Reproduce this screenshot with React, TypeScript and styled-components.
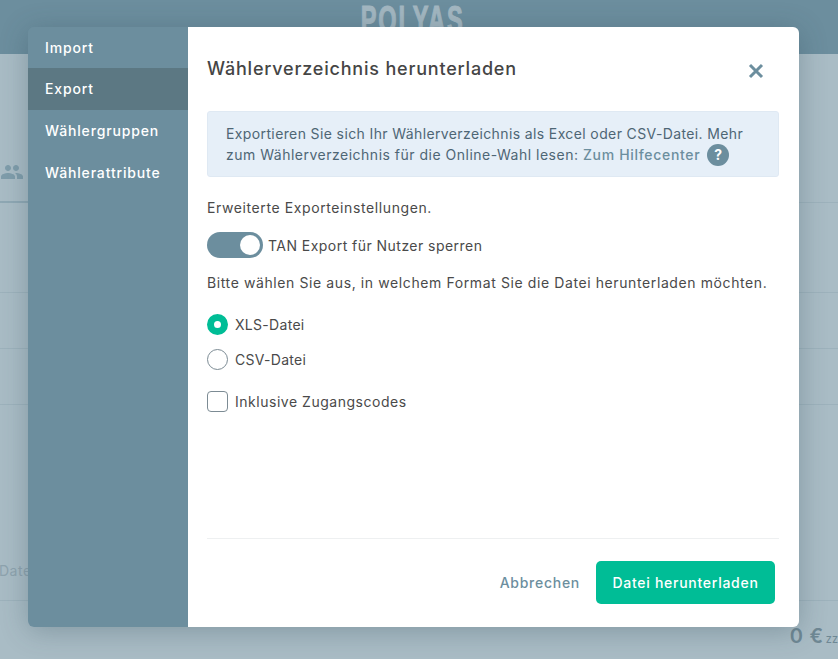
import React from "react";
import styled, { createGlobalStyle } from "styled-components";
import { MdPeople } from "react-icons/md";

const Global = createGlobalStyle`
  html, body { margin: 0; padding: 0; height: 100%; overflow: hidden; }
  * { box-sizing: border-box; }
  body { font-family: Inter, "Open Sans", "Liberation Sans", sans-serif; }
`;

const Page = styled.div`
  position: relative;
  width: 838px;
  height: 659px;
  overflow: hidden;
  background: #a9bcc5;
  display: flex;
  flex-direction: column;
`;
const Header = styled.header`
  height: 54px;
  background: #6c8e9e;
  display: flex;
  justify-content: center;
  padding: 0 12px 0 0;
  flex: none;
  overflow: hidden;
`;
const Logo = styled.div`
  font-family: "Liberation Sans", sans-serif;
  font-weight: 700;
  font-size: 38px;
  line-height: 40px;
  letter-spacing: 3px;
  color: #a3b7c1;
  -webkit-text-stroke: 1.2px #a3b7c1;
  transform: scaleX(0.62);
`;
const Tabs = styled.div`
  height: 149px;
  border-bottom: 1px solid #9db2bc;
  display: flex;
  flex: none;
`;
const ActiveTab = styled.div`
  width: 110px;
  height: 149px;
  border-bottom: 2px solid #8fa8b4;
  display: flex;
  align-items: flex-end;
  padding-bottom: 17px;
  color: #7f9dab;
`;
const Row = styled.div<{ $h: number }>`
  height: ${(p) => p.$h}px;
  border-bottom: 1px solid #9db2bc;
  flex: none;
  display: flex;
  align-items: flex-end;
  justify-content: space-between;
`;
const Faint = styled.span`
  font-size: 14px;
  letter-spacing: 0.5px;
  color: #8ea3ae;
  padding-bottom: 21px;
  margin-left: -1px;
`;
const Total = styled.div`
  display: flex;
  justify-content: flex-end;
  align-items: baseline;
  gap: 2px;
  padding-top: 23px;
  color: #6f8894;
  font-size: 20px;
  font-weight: 600;
  letter-spacing: 0.8px;
`;
const TotalUnit = styled.span`
  font-size: 11px;
  font-weight: 400;
  letter-spacing: 0;
`;

const Overlay = styled.div`
  position: absolute;
  inset: 0;
  padding: 27px 39px 32px 28px;
`;
const Modal = styled.div`
  height: 600px;
  display: flex;
  border-radius: 6px;
  overflow: hidden;
  box-shadow: 0 4px 28px rgba(40, 65, 78, 0.3);
`;
const Sidebar = styled.nav`
  width: 160px;
  flex: none;
  background: #6c8e9e;
  display: flex;
  flex-direction: column;
`;
const NavItem = styled.div<{ $active?: boolean }>`
  height: 42px;
  padding: 0 0 2px 17px;
  display: flex;
  align-items: center;
  color: #fff;
  font-size: 14px;
  font-weight: 500;
  letter-spacing: 0.85px;
  background: ${(p) => (p.$active ? "#5c7883" : "transparent")};
  &:first-child { height: 41px; padding-bottom: 0; }
`;
const Main = styled.main`
  flex: 1;
  background: #fff;
  padding: 0 20px 0 19px;
  display: flex;
  flex-direction: column;
  color: #4a4a4a;
`;
const TitleRow = styled.div`
  height: 84px;
  display: flex;
  align-items: flex-start;
  justify-content: space-between;
  padding: 30px 15px 0 0;
  flex: none;
`;
const Title = styled.h2`
  margin: 0;
  font-size: 18px;
  line-height: 24px;
  font-weight: 500;
  letter-spacing: 0.8px;
  color: #454545;
`;
const CloseIcon = styled.svg`
  width: 16px;
  height: 16px;
  margin-top: 6px;
  stroke: #6c8e9e;
  stroke-width: 3;
  fill: none;
`;
const Notice = styled.div`
  height: 66px;
  background: #e6eff8;
  border: 1px solid #dfe9f3;
  border-radius: 3px;
  padding: 11px 18px;
  font-size: 14px;
  line-height: 21px;
  color: #4e6675;
`;
const NoticeLine = styled.div<{ $track: number }>`
  display: flex;
  align-items: center;
  height: 21px;
  white-space: pre;
  letter-spacing: ${(p) => p.$track}px;
`;
const HelpLink = styled.a`
  color: #6c8e9e;
  font-weight: 500;
  letter-spacing: 0.68px;
`;
const HelpBadge = styled.span`
  display: inline-flex;
  align-items: center;
  justify-content: center;
  width: 22px;
  height: 22px;
  border-radius: 50%;
  background: #6c8e9e;
  color: #fff;
  font-size: 14px;
  font-weight: 700;
  margin-left: 7px;
  line-height: 1;
`;
const Para = styled.p<{ $top?: number }>`
  margin: ${(p) => p.$top ?? 0}px 0 0;
  font-size: 14px;
  line-height: 20px;
  letter-spacing: 0.6px;
`;
const ToggleRow = styled.div`
  display: flex;
  align-items: center;
  gap: 5px;
  margin: 14px 0 15px;
  font-size: 14px;
  letter-spacing: 0.46px;
  height: 26px;
`;
const Toggle = styled.span`
  width: 56px;
  height: 26px;
  border-radius: 13px;
  background: #6c8e9e;
  display: flex;
  justify-content: flex-end;
  align-items: center;
  padding-right: 3px;
`;
const Knob = styled.span`
  width: 20px;
  height: 20px;
  border-radius: 50%;
  background: #fff;
`;
const Choice = styled.label<{ $top: number; $track: number }>`
  display: flex;
  align-items: center;
  gap: 7px;
  height: 21px;
  margin-top: ${(p) => p.$top}px;
  font-size: 14px;
  letter-spacing: ${(p) => p.$track}px;
`;
const Radio = styled.span<{ $on?: boolean }>`
  width: 21px;
  height: 21px;
  border-radius: 50%;
  flex: none;
  background: #fff;
  border: ${(p) => (p.$on ? "7px solid #00bd96" : "1px solid #7c8b94")};
`;
const Check = styled.span`
  width: 21px;
  height: 21px;
  border-radius: 4px;
  border: 1px solid #7c8b94;
  flex: none;
`;
const Spacer = styled.div`
  flex: 1;
`;
const Footer = styled.footer`
  height: 89px;
  flex: none;
  border-top: 1px solid #eef0f1;
  display: flex;
  justify-content: flex-end;
  align-items: flex-start;
  gap: 16px;
  padding: 22px 4px 0 0;
`;
const Cancel = styled.button`
  height: 43px;
  border: 0;
  background: none;
  padding: 0;
  font: inherit;
  font-size: 14px;
  font-weight: 500;
  letter-spacing: 0.73px;
  color: #6c8e9e;
`;
const Primary = styled.button`
  width: 179px;
  height: 43px;
  border: 0;
  border-radius: 5px;
  background: #00bd96;
  color: #fff;
  font: inherit;
  font-size: 14px;
  font-weight: 500;
  letter-spacing: 0.73px;
`;

export default function App() {
  return (
    <Page>
      <Global />
      <Header><Logo>POLYAS</Logo></Header>
      <Tabs><ActiveTab><MdPeople size={24} /></ActiveTab></Tabs>
      <Row $h={90} />
      <Row $h={56} />
      <Row $h={56} />
      <Row $h={196}><Faint>Datei</Faint></Row>
      <Total>0 €<TotalUnit>zz</TotalUnit></Total>
      <Overlay>
        <Modal>
          <Sidebar>
            <NavItem>Import</NavItem>
            <NavItem $active>Export</NavItem>
            <NavItem>Wählergruppen</NavItem>
            <NavItem>Wählerattribute</NavItem>
          </Sidebar>
          <Main>
            <TitleRow>
              <Title>Wählerverzeichnis herunterladen</Title>
              <CloseIcon viewBox="0 0 16 16"><path d="M2 2 L14 14 M14 2 L2 14" /></CloseIcon>
            </TitleRow>
            <Notice>
              <NoticeLine $track={0.38}>Exportieren Sie sich Ihr Wählerverzeichnis als Excel oder CSV-Datei. Mehr</NoticeLine>
              <NoticeLine $track={0.5}>
                <span>zum Wählerverzeichnis für die Online-Wahl lesen: </span>
                <HelpLink>Zum Hilfecenter</HelpLink>
                <HelpBadge>?</HelpBadge>
              </NoticeLine>
            </Notice>
            <Para $top={21}>Erweiterte Exporteinstellungen.</Para>
            <ToggleRow><Toggle><Knob /></Toggle>TAN Export für Nutzer sperren</ToggleRow>
            <Para>Bitte wählen Sie aus, in welchem Format Sie die Datei herunterladen möchten.</Para>
            <Choice $top={21} $track={0.3}><Radio $on />XLS-Datei</Choice>
            <Choice $top={14} $track={0.3}><Radio />CSV-Datei</Choice>
            <Choice $top={21} $track={0.52}><Check />Inklusive Zugangscodes</Choice>
            <Spacer />
            <Footer>
              <Cancel>Abbrechen</Cancel>
              <Primary>Datei herunterladen</Primary>
            </Footer>
          </Main>
        </Modal>
      </Overlay>
    </Page>
  );
}
